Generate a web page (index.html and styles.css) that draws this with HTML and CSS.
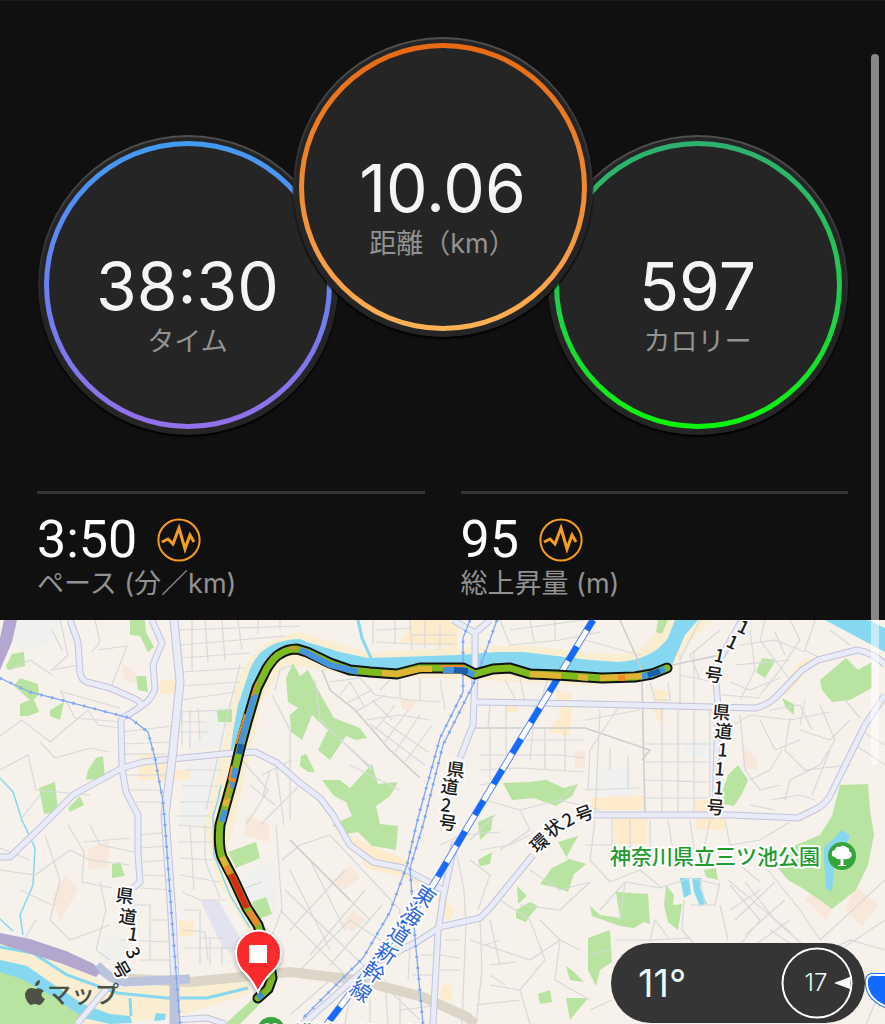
FILE: index.html
```html
<!DOCTYPE html>
<html lang="ja">
<head>
  <meta charset="UTF-8">
  <meta name="viewport" content="width=device-width, initial-scale=1.0">
  <title>ランニング</title>
  <link rel="stylesheet" href="styles.css">
</head>
<body>
  <main class="activity">
    <section class="summary">
      <div class="dials">
        <div class="dial dial-side">
          <div class="ring ring-time">
            <span class="dial-value">38:30</span>
            <span class="label">タイム</span>
          </div>
        </div>
        <div class="dial dial-main">
          <div class="ring ring-distance">
            <span class="dial-value">10.06</span>
            <span class="label">距離（km）</span>
          </div>
        </div>
        <div class="dial dial-side">
          <div class="ring ring-calorie">
            <span class="dial-value">597</span>
            <span class="label">カロリー</span>
          </div>
        </div>
      </div>

      <div class="stats">
        <div class="stat">
          <div class="stat-row">
            <span class="stat-value">3:50</span>
            <svg class="stat-icon" viewBox="0 0 44 44">
              <circle cx="22" cy="22" r="20.6"/>
              <path d="M5 24l6-3 5 5 6-16 6 21 5-14 4 7"/>
            </svg>
          </div>
          <span class="label">ペース (分／km)</span>
        </div>
        <div class="stat">
          <div class="stat-row">
            <span class="stat-value">95</span>
            <svg class="stat-icon" viewBox="0 0 44 44">
              <circle cx="22" cy="22" r="20.6"/>
              <path d="M5 24l6-3 5 5 6-16 6 21 5-14 4 7"/>
            </svg>
          </div>
          <span class="label">総上昇量 (m)</span>
        </div>
      </div>
    </section>

    <section class="map">
      <svg class="map-canvas" viewBox="0 0 885 404">
        <defs>
          <g id="roads">
            <path d="M70 0L78 22 80 52Q81 60 87 62L110 68 133 78Q141 81 142 87"/>
            <path d="M152 0L162 23 153 45 155 68Q153 78 143 85L128 95Q121 97 121 102L122 148 126 172 138 195 138 232 140 262 133 268"/>
            <path d="M0 237H10L43 205 73 175 122 148 143 142 172 139 233 133 255 132 277 143 300 163 320 178 333 195 350 225 373 242 403 248 443 270"/>
            <path d="M453 0L475 13 490 0M475 13V55L473 105 460 138M455 222L443 278 438 312 433 404"/>
            <path d="M475 82L590 84 755 88Q766 86 775 78L802 50 818 40 857 30Q875 33 885 45"/>
            <path d="M885 75L865 105 832 172Q828 182 818 188L798 198 732 195 585 195"/>
            <path d="M533 235L490 288 480 298 440 307 417 322 370 345 303 404"/>
            <path d="M742 0L715 48 718 88 715 192M107 368L77 404M175 400L207 398 225 404"/>
          </g>
          <g id="rail-lines">
            <path d="M0 58L30 72 130 98 148 112 155 138 163 182 165 205 172 300 180 404"/>
            <path d="M470 0L463 18V72L440 118 418 198 407 245 390 292 363 338 303 398"/>
            <path d="M497 0L487 28 473 65 443 125 423 205 410 248 415 318 423 404"/>
          </g>
          <path id="route" d="M258 378L268 369 272 358 268 335 258 305 247 288 233 258 222 237Q218 226 220 205L233 158 240 128 247 102 257 68 267 48Q275 36 280 34 287 29 297 29L307 32 330 43 350 50 370 52 397 54 420 48 437 48 463 48 475 54 493 49 510 48 530 54 557 55 602 58 635 57 652 54 667 48"/>
          <path id="shinkansen" d="M593 0L470 203 433 265 330 400 326 406"/>
        </defs>

        <rect class="land" width="885" height="404"/>

        <!-- city blocks -->
        <path class="block-grey" d="M17 0H58L56 20 22 32 12 20zM213 90L235 80 228 126 190 130zM185 142L230 138 218 205 180 205zM685 120H725V137H685zM596 148H632V176H596zM250 250L275 238 277 295 262 300 240 262zM105 315L130 320 125 345 100 340z"/>
        <path class="block-lilac" d="M200 280H218L240 318 232 334 222 326z"/>
        <path class="block-orange" d="M160 60H176V74H160zM140 135H166V150H192L188 160H138zM412 0H458V28L400 22zM613 198H647V224H615zM590 178L645 175V190H592zM694 180H725V210H697zM655 68L668 72 660 105 652 88zM556 70L572 74 570 116 548 112 560 95zM506 80H518V92H506zM780 70L800 42 812 38 800 60 786 76zM350 215L380 230 408 240 420 262 440 275 455 290 448 302 434 270 400 256 366 248zM178 300L194 302V316H180zM442 365H452V380H440z"/>
        <path class="block-pink" d="M122 44L136 52 136 64 124 60zM65 255L78 270 60 300 52 278zM88 228L110 220 108 246 88 250zM745 125L757 140V150L742 148zM805 280L820 262 838 278 826 300zM855 265L878 285 862 306 845 290zM245 195L270 205 268 222 245 215zM333 260L350 245 360 258 342 270zM400 78L416 82 410 92 402 88zM575 130L585 132V148H575zM340 305L354 290 366 300 352 312z"/>

        <!-- river banks and parks -->
        <path class="bank" d="M205 205L218 150 230 90 240 55Q258 18 300 12L368 32 497 26 530 26 620 35Q652 30 662 0H712L690 22 672 48 590 66 480 60 350 55 285 44 262 80 242 170 228 230 260 310 252 318 216 258zM0 322L70 342 110 368 250 362 250 374 180 395 110 404H0z"/>
        <path class="park" d="M130 0H145L146 12 154 27 148 32 140 16 130 15zM12 34L24 32 25 46 8 50 6 46zM20 58L38 64 39 74 34 80 39 92 28 96 20 96 20 84 30 80 14 66zM50 90L64 82 60 100 50 96zM136 56H146L148 72 138 70zM217 90L232 89V102H218zM96 138L103 136 105 158 86 160 88 150zM39 168L55 162 58 192 44 194zM68 188L80 176 84 185 70 192zM112 244L120 242 125 256 112 258zM228 232L256 222 260 238 236 248zM252 282L266 277 272 294 256 300z"/>
        <path class="park" d="M286 58L293 43 300 56 308 50 318 70 334 98 360 108 367 118 356 120 346 116 330 140 318 130 328 110 312 95 302 120 291 112 290 95 298 88 288 82zM301 136L306 134 315 152 308 152 300 146zM322 160L340 160 350 168 372 144 378 164 398 162 390 176 376 186 380 204 398 206 396 230 372 226 358 212 346 214 332 205 352 196 346 182 334 176z"/>
        <path class="park" d="M503 163L530 162 546 160 564 168 578 164 572 176 556 186 534 178 512 180zM478 202L493 195 491 210 480 220zM478 240L492 232 490 244 480 246z"/>
        <path class="park" d="M558 222L578 216 566 238 586 244 574 254 568 272 558 268 540 264 552 248 568 240zM517 266L527 276 518 284zM516 290L530 282 538 286 528 298 526 302 516 298zM566 346L574 352 584 362 570 360zM538 374L550 370 552 382 540 384zM566 378L588 378 570 400zM590 286L600 295 620 298 616 272 648 274 650 304 644 302 634 308 620 306 592 296zM588 318L610 310 612 342 600 350 596 366 588 350zM664 285L666 265 674 275 673 285 682 284 678 310 668 302zM704 250L716 248 718 260 706 257z"/>
        <path class="park" d="M762 38L776 40 765 58 756 52zM782 78L794 84 794 95 786 88zM723 170L728 155 738 145 748 160 742 174 734 186 724 184zM820 60L846 38 858 50 872 42 872 68 850 80 832 82 822 70zM840 165L868 164 870 190 874 215 868 245 856 270 832 289 820 280 802 268 788 260 778 248 796 225 820 215 832 196zM658 0H668L662 14 656 12z"/>
        <path class="park" d="M0 350L32 358 60 374 84 398 78 404H0zM225 404L256 376 260 384 240 404z"/>

        <!-- water -->
        <path class="water" d="M230 135L233 112 238 85 248 55Q258 20 300 19L307 22 340 32 368 38 400 37 457 35 497 32 523 32 590 40 618 42Q652 40 668 18L675 0H698L685 15 672 45 640 58 590 58 475 52 350 52 292 30 265 50 240 115zM825 0L885 32V8L868 0zM0 340L27 346 50 362 83 384 110 394 130 396 132 403 110 404 84 398 50 375 24 360 0 352zM156 393L166 394 165 400 154 401zM680 258H689L691 274 684 278zM692 258H702L700 268 707 284 700 286 694 272zM824 228L842 210 850 216 840 240 834 248 832 272 826 268 824 240z"/>
        <path class="stream wide" d="M358 0L362 18 371 38M0 327L33 333 67 355 117 373 167 378 207 378 248 368M130 378L131 396"/>
        <path class="stream" d="M0 158L13 172 22 200 35 228 33 265 20 295 23 315M213 195L214 235 230 275 250 308M0 299L13 311M221 165L218 180 213 196"/>

        <!-- side streets -->
        <path class="street" d="M60 0L68 35 52 50 78 45M62 30L52 10M98 30L127 26 110 70M0 116L22 100 50 122 88 90M60 70L75 98 121 102M62 72L120 88M88 90L98 105 118 108M40 122L55 138 90 128 110 132M0 150L28 135 36 170 90 175M20 200L40 175M10 50L30 40 52 55M95 0L100 22 92 32"/>
        <path class="street" d="M178 10L300 6M180 25L285 16M180 38L250 33M182 52L245 48M181 66L240 62M180 80L236 72M178 92L225 90M192 0V50M205 0L208 42M222 0L225 40M238 0L242 30M258 0V14M280 0V10M240 45L225 105 206 190M122 112L172 106M124 124L172 122M122 134H170M125 155H170M128 170H168M136 182H166M182 92V125M190 90V128M198 88L200 120M178 102H206M178 112H208M186 150H222M182 166H218M180 182H214M178 196H210"/>
        <path class="street" d="M0 250L35 255 70 230 90 240 130 245M45 215L60 260 50 300 70 320 110 305M68 205L84 232 82 262 112 268M84 222L130 218M140 215L170 212M140 228L168 226M142 242L168 240M140 255L168 256M140 268L170 270M120 285H150V340M150 300H172M120 320L172 322M140 340H172M20 270L52 285M36 300L24 320M100 262L106 290 96 330 110 340M30 240L0 228M90 205L100 225 134 232"/>
        <path class="street" d="M178 205L214 208M178 222H212M180 238L214 240M180 255L220 262M182 272L200 280 226 280M184 290H200V345M182 310L205 312 208 340M184 328H236M200 318H228M210 318V345M222 326V345M205 205V240L220 278M190 205L194 270"/>
        <path class="street" d="M275 70L280 50 292 45M272 75L290 110 290 200M240 138L268 170 246 205M262 155L292 140M250 165L275 185M270 150L262 180M276 145L284 205M276 205L282 290 270 320M240 270L262 262M282 240L300 225 330 215M280 290L345 355M285 270L420 400M330 215L400 290 395 330 350 300 300 350M300 230L370 300M345 250L290 310M365 270L310 335M382 285L330 345M290 250L330 330M310 240L345 310M300 165L260 205M290 395L330 360 350 375 345 404M370 352V404M385 360L388 404M400 368V404"/>
        <path class="street" d="M373 0V25M376 22L410 24M376 10L412 8M395 0V24M410 0L412 30M425 0V28M440 5V30M412 15H455M412 24H455M500 0L510 25 560 20 600 12M510 10L585 0M530 0L534 22M555 0V20"/>
        <path class="street strong" d="M322 50L330 70 355 90 388 128 420 158M475 108H585L650 130 642 140M620 0L640 45 642 60 645 195M668 46L720 35M290 220L350 280"/>
        <path class="street" d="M330 62L360 58 375 75 410 80 440 82M340 75L350 62 365 88M345 84L372 70M355 92L385 75M365 100L400 95 430 100M375 110L395 85M385 122L408 90M395 132L420 95M405 142L432 105M370 104L425 145M382 100L428 132M400 60V78M420 58V80M440 60L445 90M372 80L392 100M315 60L320 100 372 150M380 70L390 60M350 145L400 170M330 110L372 148"/>
        <path class="street" d="M490 85L488 108M505 60L515 78M520 58L525 84M548 58L540 84M506 86V108M535 86L530 140M490 108V160M506 108V150M480 135H560L585 138M480 150L520 148 585 152M480 165L500 162M526 120H585M545 108V150M565 110V150M485 180L520 190 560 180 600 190M520 190L530 210 500 230M560 180L575 165M495 195L470 220M480 230L510 225 530 215"/>
        <path class="street" d="M600 90L595 195M618 88L590 130 588 170M662 88V195M678 88V195M694 88V195M710 88V195M645 124H710M645 142H710M645 160L710 162M645 178H710M585 170L640 168M610 128V150M628 136V168M585 20L640 35M585 100L640 90M650 62L655 80 670 80 668 62M680 35V88M694 30V88M680 55L715 62M700 0L680 40M720 10L690 35 700 60"/>
        <path class="street" d="M765 0L760 20 790 60M790 0L800 20 780 50 760 75M815 0L805 30 820 38M740 25L775 20 805 32M735 45L790 40M730 62L750 70 780 58M750 10L755 50 740 80M775 12L785 35M830 10L850 25M722 75L760 78M725 110L750 95 790 100 830 92M740 95L745 150 760 170 780 165M760 100L775 130 800 120M790 98L785 130 805 150 850 145M800 110L830 120 850 100M770 90L800 85 812 110M805 80L800 105M820 85L835 120 820 145 790 160 785 180M770 180L800 175 815 180M750 185L775 190M845 80L860 98M830 130L812 175M750 160L770 150 782 130M860 110L885 125M855 125L885 145"/>
        <path class="street" d="M595 200L590 240 610 262M612 200V225M630 200V228M650 200V230M668 200L672 225M690 200L695 235M710 200L705 225M725 200L730 225 760 220 790 202M585 225H612M590 262L560 290 520 285M600 290L625 262 660 268 690 258 720 265M690 285H715L720 262M684 280L682 310 700 330M720 285L728 320M700 258L705 285M730 265L760 300 740 325M745 262L775 300 820 340M760 240L800 290 820 320M728 260L790 312M740 245L760 262M735 300L775 262M745 315L785 280M755 325L790 300M760 270L730 290M770 310L800 330M820 320L885 260M840 330L885 300M800 345L850 320 885 330M610 262L640 250 662 268M655 300L650 320 690 318M615 320H660M620 335L680 325M618 342L615 360M655 300L670 320"/>
        <path class="street" d="M456 230L464 270 466 305 462 404M480 300L482 350 476 404M445 320H460M440 335L460 338M440 350H460M470 320L530 340 560 320 580 330M490 300L500 345M500 280L530 300 545 340 520 370 490 365M500 320L485 325M540 300L560 320 555 360 590 380M470 240L490 255 478 290M530 250L560 270 590 262M490 345L515 342M490 355L505 365M520 370L530 404M476 385L520 380M590 335L610 330M590 390L612 380M410 330L408 360M420 335H434V355H412M418 340V352M400 390L440 385M440 225L462 215 500 212M866 404L885 360M620 300L625 262"/>

        <!-- expressway -->
        <path class="beige-road" d="M115 358L190 362 290 352 357 360 423 377 467 397 475 404"/>
        <path class="blue-road" d="M97 345Q110 360 125 362L190 359"/>
        <path class="purple" d="M0 313L30 319 66 331 94 344 100 353 96 357 60 343 0 324zM4 0H17L12 22 0 50V18z"/>

        <use class="road-edge" href="#roads"/>
        <use class="road-fill" href="#roads"/>
        <path class="road-edge main" d="M174 0L180 62 172 139 165 195 172 295 175 362V404"/>
        <path class="road-fill main" d="M174 0L180 62 172 139 165 195 172 295 175 362V404"/>
        <path class="blue-road" d="M174 355V404"/>

        <!-- railways -->
        <use class="rail" href="#rail-lines"/>
        <use class="rail-dots" href="#rail-lines"/>
        <use class="shinkansen-edge" href="#shinkansen"/>
        <use class="shinkansen-gap" href="#shinkansen"/>
        <use class="shinkansen" href="#shinkansen"/>

        <!-- run track, coloured by pace -->
        <use class="track-edge" href="#route"/>
        <use class="track" href="#route"/>
        <path class="pace blue" d="M258 378L263 374M222 202L225 190M231 168L236 148M241 124L247 102 255 74M300 30L307 33 330 45 358 52M443 50L463 50 474 55M640 57L652 54 665 49"/>
        <path class="pace navy" d="M239 134L241 124M454 50L468 51M648 55L660 51"/>
        <path class="pace yellow" d="M382 53L397 54 420 49 432 49M530 54L561 56M578 57L588 58M600 58L642 56M270 340L262 318M222 237L226 246M225 186L228 178"/>
        <path class="pace-thin orange" d="M236 124L245 94M229 160L232 146M252 76L257 62M440 46L463 46M226 180L230 164M290 28H297"/>
        <path class="pace orange" d="M226 246L230 254M249 291L258 305M232 162L233 158M618 58H625"/>
        <path class="pace red" d="M231 254L247 288"/>

        <!-- road names -->
        <g class="road-name">
          <text x="446 440 440 438" y="155 172 191 208" rotate="8 8 8 8">県道2号</text>
          <text x="712 714 717 714 713 706" y="98 117 136 155 174 193" rotate="5">県道111号</text>
          <text x="736 725 713 704" y="11 26 41 60" rotate="25 25 12 8">111号</text>
          <text x="115 118 127 125 111" y="281 302 320 331 345" rotate="8 8 8 65 60">県道13号</text>
          <text x="537 551 567 578" y="234 219 208 203" rotate="-42 -40 -30 -20">環状2号</text>
        </g>
        <text class="line-name" x="0 0 0 0 0 0" y="0 23 46 69 92 115" transform="translate(431 267) rotate(34)">東海道新幹線</text>
        <text class="park-name" x="610" y="244">神奈川県立三ツ池公園</text>
        <text class="park-name" x="293" y="421">横浜アリーナ</text>

        <!-- park pins -->
        <circle class="park-pin" cx="842" cy="236" r="14"/>
        <path class="park-tree" d="M840.500 245V239Q837 240 835 237 831 237 832 233 832 230 835 230 836 226 840 227 843 224 846 227 850 228 849 231 853 233 851 237 848 240 843.500 239V245H846V246H838V245z"/>
        <circle class="park-pin" cx="271" cy="411" r="14"/>
        <path class="park-tree" d="M265 403h4v3h-4zM273 403h4v3h-4z"/>
        <path class="route-sign-edge" d="M867 360Q868 354 876 355H895V390Q876 384 870 374 866 367 867 360z"/>
        <path class="route-sign" d="M867 360Q868 354 876 355H895V390Q876 384 870 374 866 367 867 360z"/>

        <!-- finish pin -->
        <path class="pin" d="M258 372Q252 359 242 350 236 343 236 333A22.500 22.500 0 0 1 281 333Q281 343 274 350 264 359 258 372z"/>
        <rect class="pin-stop" x="249" y="325" width="18" height="18"/>

        <!-- map provider -->
        <g class="provider">
          <path d="M40 360Q35 361 35 366 40 366 40 360zM44 371Q40 367 35.500 369 31 367 28 369 24 372 25.500 378 28 384 31 385 33 384 35.500 384 38 385 40 385 43 383 45 379 41 377 41.500 374 42 372 44 371z"/>
          <text x="47" y="383">マップ</text>
        </g>
      </svg>

      <div class="weather">
        <span class="temperature">11°</span>
        <svg class="wind" viewBox="0 0 72 72">
          <circle cx="36" cy="36" r="34.500"/>
          <path d="M53 36L69 30V42z"/>
          <text x="35" y="44">17</text>
        </svg>
      </div>
    </section>

    <div class="scroll-thumb"></div>
  </main>
</body>
</html>
```
FILE: styles.css
```css
* {
  box-sizing: border-box;
}
body {
  margin: 0;
  background: #101010;
  color: #fff;
  font-family: Inter, "Noto Sans CJK JP", sans-serif;
}
.activity {
  position: relative;
  overflow: hidden;
}
.summary {
  padding: 36px 37px 18px;
  border-top: 1px solid #1b1b1b;
}

/* dials */
.dials {
  display: flex;
  justify-content: center;
  align-items: flex-start;
}
.dial {
  width: 300px;
  height: 300px;
  flex: none;
  padding: 4px;
  border: 2px solid transparent;
  border-radius: 50%;
  background: linear-gradient(#252525, #252525) padding-box, linear-gradient(#505050, #242424 60%) border-box;
  box-shadow: 0 2px 2px #000;
}
.dial-side {
  margin-top: 98px;
}
.dial-main {
  position: relative;
  margin: 0 -45px;
}
.ring {
  display: flex;
  flex-direction: column;
  align-items: center;
  height: 100%;
  padding-top: 107px;
  border: 5px solid transparent;
  border-radius: 50%;
}
.ring-time {
  background: linear-gradient(#252525, #252525) padding-box, linear-gradient(#429af0, #6a80f5 50%, #9470ea) border-box;
}
.ring-distance {
  background: linear-gradient(#252525, #252525) padding-box, linear-gradient(#e86a12, #f08a30 50%, #ffb055) border-box;
}
.ring-calorie {
  background: linear-gradient(#252525, #252525) padding-box, linear-gradient(#2eb070, #20cc50 50%, #0cf50c) border-box;
}
.dial-value {
  color: #f5f5f5;
  font-size: 66px;
  line-height: 66px;
  margin-bottom: 5px;
}
.label {
  display: block;
  color: #929292;
  font-size: 27px;
  line-height: 36px;
  white-space: nowrap;
}

/* stats */
.stats {
  display: flex;
  gap: 36px;
  margin-top: 56px;
}
.stat {
  flex: 1;
  padding-top: 20px;
  border-top: 3px solid #343434;
}
.stat-row {
  display: flex;
  align-items: center;
  gap: 20px;
  height: 52px;
}
.stat-value {
  font-family: Roboto, sans-serif;
  font-size: 52px;
  line-height: 52px;
}
.stat-icon {
  width: 44px;
  height: 44px;
  fill: none;
  stroke: #f79d1e;
  stroke-width: 2;
}
.stat-icon path {
  stroke-width: 3;
}

/* map */
.map {
  position: relative;
}
.map-canvas {
  display: block;
  width: 100%;
  height: auto;
  font-family: "Noto Sans CJK JP", sans-serif;
}
.land { fill: #f6f1ea; }
.block-grey { fill: #f0f0ee; }
.block-lilac { fill: #e2e3ee; }
.block-orange { fill: #fdebcb; }
.block-pink { fill: #f8e8dc; }
.bank { fill: #f9eed2; }
.park { fill: #b9e3a0; }
.water { fill: #86d8f1; }
.purple { fill: #b3a6cf; }
.stream {
  fill: none;
  stroke: #86d8f1;
  stroke-width: 1.5;
}
.stream.wide {
  stroke-width: 3;
}
.street {
  fill: none;
  stroke: #d6dadb;
  stroke-width: 1.2;
}
.street.strong {
  stroke: #cbcdcd;
  stroke-width: 1.5;
}
.beige-road, .blue-road {
  fill: none;
  stroke: #dbd6c8;
  stroke-width: 10;
}
.blue-road {
  stroke: #bcc3dc;
  stroke-width: 9;
}
.road-edge, .road-fill {
  fill: none;
  stroke: #c3c4dd;
  stroke-width: 7;
  stroke-linejoin: round;
}
.road-fill {
  stroke: #e9ebf6;
  stroke-width: 5;
}
.road-edge.main {
  stroke-width: 9;
}
.road-fill.main {
  stroke-width: 7;
}
.rail, .rail-dots {
  fill: none;
  stroke: #82a8f3;
  stroke-width: 1.3;
}
.rail-dots {
  stroke-width: 3;
  stroke-dasharray: 2 9;
}
.shinkansen-edge, .shinkansen-gap, .shinkansen {
  fill: none;
  stroke: #5f88ee;
  stroke-width: 7;
}
.shinkansen-gap {
  stroke: #fff;
  stroke-width: 5;
}
.shinkansen {
  stroke: #146aff;
  stroke-width: 6;
  stroke-dasharray: 17 19;
  stroke-dashoffset: 5;
}
.track-edge, .track, .pace, .pace-thin {
  fill: none;
  stroke: #111;
  stroke-width: 11;
  stroke-linecap: round;
  stroke-linejoin: round;
}
.track {
  stroke: #7dbb20;
  stroke-width: 7;
}
.pace {
  stroke-width: 6;
  stroke-linecap: butt;
}
.pace-thin {
  stroke-width: 2;
  stroke-linecap: butt;
}
.blue { stroke: #4794dc; }
.navy { stroke: #1c5fa8; }
.yellow { stroke: #e0b535; }
.orange { stroke: #ea8a2c; }
.red { stroke: #d92a16; }

.road-name, .line-name, .park-name {
  fill: #1c1c1c;
  stroke: #fff;
  stroke-width: 4;
  stroke-linejoin: round;
  paint-order: stroke;
  font-size: 18px;
  font-weight: 500;
}
.line-name {
  fill: #2f66dd;
  font-size: 21px;
  font-weight: 400;
  writing-mode: vertical-rl;
}
.park-name {
  fill: #229a2c;
  font-size: 21px;
}
.park-pin { fill: #35a53c; }
.park-tree { fill: #fff; }
.route-sign {
  fill: #146aff;
  stroke: #fff;
  stroke-width: 2;
}
.route-sign-edge {
  fill: #146aff;
  stroke: #146aff;
  stroke-width: 4;
}
.pin {
  fill: #fb2a2c;
  stroke: #fff;
  stroke-width: 2;
  filter: drop-shadow(0 2px 2px rgba(0,0,0,0.3));
}
.pin-stop { fill: #fff; }
.provider {
  fill: #4b5145;
  font-size: 24px;
  font-weight: 500;
}

/* weather */
.weather {
  position: absolute;
  right: 20px;
  bottom: 1px;
  display: flex;
  align-items: center;
  justify-content: space-between;
  width: 254px;
  height: 80px;
  padding: 0 12px 0 27px;
  border-radius: 40px;
  background: #353535;
}
.temperature {
  color: #eafafa;
  font-size: 38px;
}
.wind {
  width: 72px;
  height: 72px;
  fill: #fff;
}
.wind circle {
  fill: none;
  stroke: #fff;
  stroke-width: 2;
}
.wind text {
  fill: #eafafa;
  font-size: 24px;
  font-weight: 300;
  text-anchor: middle;
}

.scroll-thumb {
  position: absolute;
  top: 54px;
  right: 6px;
  width: 8px;
  height: 711px;
  border-radius: 4px;
  background: rgba(255,255,255,0.5);
}
```
